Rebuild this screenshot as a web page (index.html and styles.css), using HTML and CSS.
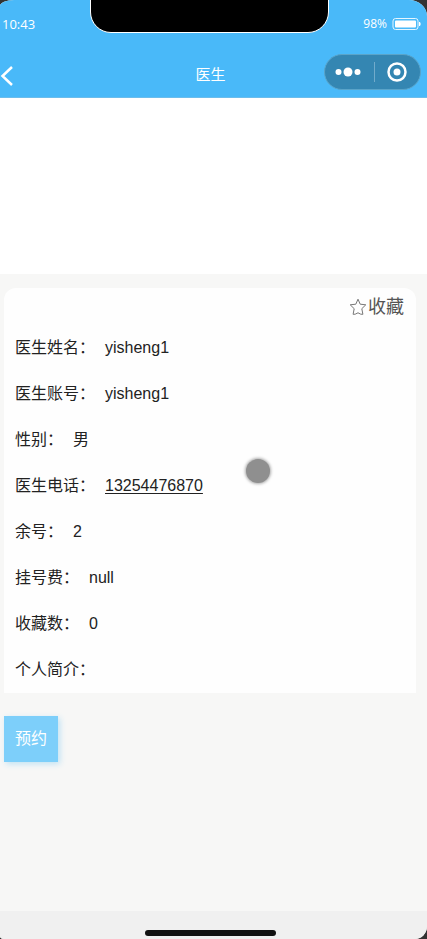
FILE: index.html
```html
<!DOCTYPE html>
<html lang="zh-CN">
<head>
    <meta charset="UTF-8">
    <meta name="viewport" content="width=device-width, initial-scale=1.0">
    <title>医生</title>
    <link rel="stylesheet" href="styles.css">
</head>
<body>
    <div class="phone">
        <header class="header">
            <div class="notch"></div>
            <div class="status">
                <span class="time">10:43</span>
                <span class="power">98%
                    <svg width="30" height="14" viewBox="0 0 30 14">
                        <rect x="1" y="1.5" width="25" height="11" rx="2.5" fill="none" stroke="#e6f6ff"/>
                        <rect x="3" y="3.5" width="21" height="7" rx="1" fill="#fff"/>
                        <path d="M27 5h1q1.500 2 0 4h-1z" fill="#fff"/>
                    </svg>
                </span>
            </div>
            <nav class="nav">
                <button class="back" aria-label="返回">
                    <svg width="16" height="22" viewBox="0 0 16 22">
                        <path d="M12 2L2.500 11l9.500 9" fill="none" stroke="#fff" stroke-width="2.500"/>
                    </svg>
                </button>
                <h1 class="title">医生</h1>
                <div class="capsule">
                    <button aria-label="更多">
                        <svg width="28" height="20" viewBox="0 0 28 20">
                            <circle cx="4.500" cy="10" r="3" fill="#fff"/>
                            <circle cx="14" cy="10" r="4.500" fill="#fff"/>
                            <circle cx="23.500" cy="10" r="3" fill="#fff"/>
                        </svg>
                    </button>
                    <span class="line"></span>
                    <button aria-label="关闭">
                        <svg width="20" height="20" viewBox="0 0 20 20">
                            <circle cx="10" cy="10" r="8.500" fill="none" stroke="#fff" stroke-width="2.500"/>
                            <circle cx="10" cy="10" r="3.500" fill="#fff"/>
                        </svg>
                    </button>
                </div>
            </nav>
        </header>

        <div class="banner"></div>

        <main class="main">
            <section class="card">
                <button class="collect">
                    <svg width="18" height="18" viewBox="0 0 18 18">
                        <path d="M9 1.200l2.200 5 5.600.6-4 3.900 1.100 5.600-2.100-.1L9 14.800l-2.800 1.400-2.100.1 1.100-5.600-4-3.900 5.600-.6z" fill="none" stroke="#777" stroke-linejoin="round"/>
                    </svg>
                    收藏
                </button>
                <dl class="info">
                    <div class="row"><dt>医生姓名：</dt><dd>yisheng1</dd></div>
                    <div class="row"><dt>医生账号：</dt><dd>yisheng1</dd></div>
                    <div class="row"><dt>性别：</dt><dd>男</dd></div>
                    <div class="row"><dt>医生电话：</dt><dd><a href="tel:13254476870">13254476870</a></dd></div>
                    <div class="row"><dt>余号：</dt><dd>2</dd></div>
                    <div class="row"><dt>挂号费：</dt><dd>null</dd></div>
                    <div class="row"><dt>收藏数：</dt><dd>0</dd></div>
                    <div class="row"><dt>个人简介：</dt><dd></dd></div>
                </dl>
            </section>
            <button class="order">预约</button>
        </main>

        <footer class="footer"><div class="home-bar"></div></footer>
        <div class="touch"></div>
    </div>
</body>
</html>
```

FILE: styles.css
```css
* {
    box-sizing: border-box;
}

body {
    margin: 0;
    background: #333;
    color: #222;
    font-family: "Liberation Sans", "Noto Sans CJK SC", sans-serif;
    font-size: 16px;
}

button {
    border: none;
    padding: 0;
    background: none;
    color: inherit;
    font-family: inherit;
    cursor: pointer;
}

svg {
    display: block;
}

.phone {
    position: relative;
    display: flex;
    flex-direction: column;
    min-height: 100vh;
    overflow: hidden;
    background: #f7f7f6;
    border-radius: 14px 18px 12px 4px / 6px 16px 13px 3px;
}

/* header */
.header {
    position: relative;
    background: #49b9f9;
    border-bottom: 1px solid #6cbdec;
    color: #fff;
}

.notch {
    position: absolute;
    top: -2px;
    left: 90px;
    right: 98px;
    height: 35px;
    background: #000;
    border: 1px solid #fff;
    border-radius: 0 0 21px 21px;
}

.status {
    display: flex;
    justify-content: space-between;
    height: 49px;
    padding: 0 5px 2px 2px;
    align-items: center;
    font-family: "Open Sans", sans-serif;
}

.time {
    font-size: 13px;
}

.power {
    display: flex;
    align-items: center;
    gap: 5px;
    font-size: 12px;
}

.nav {
    display: grid;
    grid-template-columns: 1fr auto 1fr;
    align-items: center;
    height: 48px;
    padding-right: 6px;
}

.back {
    justify-self: start;
    padding-top: 5px;
}

.title {
    margin: 0;
    font-size: 15px;
    font-weight: normal;
}

.capsule {
    display: flex;
    align-items: center;
    justify-content: space-between;
    justify-self: end;
    width: 97px;
    height: 36px;
    margin-bottom: 3px;
    padding: 0 13px 0 9px;
    background: #3486b2;
    border: 1px solid #5aa4c9;
    border-radius: 18px;
}

.line {
    width: 1px;
    height: 20px;
    background: #71abcb;
}

.banner {
    height: 176px;
    background: #fff;
}

/* doctor info */
.main {
    flex: 1;
    padding: 14px 11px 24px 4px;
}

.card {
    display: flex;
    flex-direction: column;
    background: #fefefe;
    border-radius: 12px 12px 0 0;
}

.collect {
    display: flex;
    align-items: center;
    align-self: flex-end;
    gap: 1px;
    height: 37px;
    margin-right: 12px;
    color: #555;
    font-size: 18px;
    line-height: 36px;
}

.info {
    margin: 0;
    line-height: 46px;
}

.row {
    display: flex;
    gap: 10px;
    height: 46px;
    padding: 0 11px;
}

dd {
    margin: 0;
}

.row a {
    color: inherit;
    text-underline-offset: 2px;
}

.order {
    height: 46px;
    margin-top: 23px;
    padding: 0 11px;
    background: #7dcffa;
    box-shadow: 2px 2px 6px #bfe2f4;
    color: #fff;
    font-size: 16px;
    line-height: 46px;
}

.footer {
    display: flex;
    align-items: flex-end;
    justify-content: center;
    height: 28px;
    padding: 0 7px 3px 0;
    background: #f0f0f0;
}

.home-bar {
    width: 131px;
    height: 6px;
    background: #111;
    border-radius: 3px;
}

/* touch point over the page */
.touch {
    position: absolute;
    top: 459px;
    left: 246px;
    width: 24px;
    height: 24px;
    background: #8f8f8f;
    border-radius: 50%;
    box-shadow: 0 0 3px 1px #aaa;
}
```
